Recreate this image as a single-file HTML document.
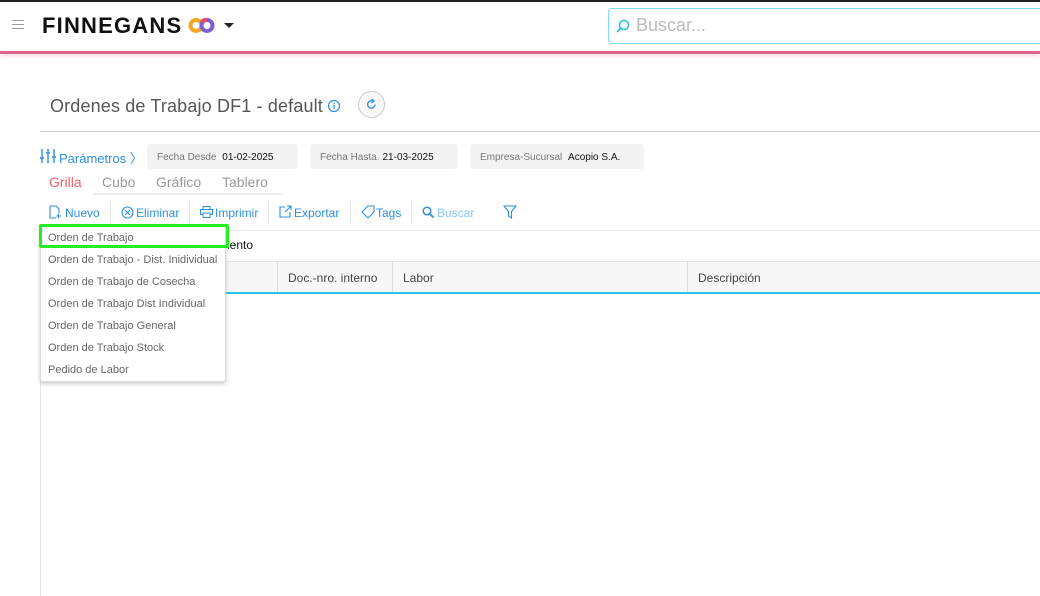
<!DOCTYPE html>
<html><head><meta charset="utf-8"><style>
*{margin:0;padding:0;box-sizing:border-box}
body{width:1040px;height:596px;background:#fff;font-family:"Liberation Sans",sans-serif;position:relative;overflow:hidden}
.a{position:absolute}
.blue{color:#2d8fe0}
</style></head><body>
<div class="a" style="left:0;top:0;width:1040px;height:2px;background:#222"></div>
<div class="a" style="left:0;top:51px;width:1040px;height:3px;background:#e0648a;box-shadow:0 2px 4px rgba(224,100,138,.3)"></div>
<div class="a" style="left:12px;top:20px;width:12px;height:1px;background:#999;box-shadow:0 4px 0 #999,0 8px 0 #999"></div>
<div class="a" style="left:42px;top:13px;font-size:22px;font-weight:bold;letter-spacing:1.2px;color:#111">FINNEGANS</div>
<svg class="a" style="left:188px;top:17px" width="28" height="17" viewBox="0 0 28 17"><circle cx="8" cy="8.5" r="5.5" fill="none" stroke="#f5a623" stroke-width="4"/><circle cx="19" cy="8.5" r="5.5" fill="none" stroke="#7b5fd6" stroke-width="4"/><path d="M13.5 5 A5.5 5.5 0 0 1 19 3" stroke="#e94f6a" stroke-width="4" fill="none"/></svg>
<div class="a" style="left:224px;top:23px;border-left:5px solid transparent;border-right:5px solid transparent;border-top:5px solid #222"></div>
<div class="a" style="left:608px;top:8px;width:440px;height:36px;border:1px solid #7bdcf5;border-radius:4px"></div>
<svg class="a" style="left:615px;top:18px" width="16" height="16" viewBox="0 0 16 16"><circle cx="9" cy="7" r="4.5" fill="none" stroke="#2bbde8" stroke-width="1.6"/><path d="M6 10 L2 14" stroke="#2bbde8" stroke-width="1.8"/></svg>
<div class="a" style="left:636px;top:15px;font-size:18px;color:#bbb">Buscar...</div>

<div class="a" style="left:50px;top:96px;font-size:18px;color:#555;letter-spacing:0.15px">Ordenes de Trabajo DF1 - default</div>
<svg class="a" style="left:327px;top:99px" width="14" height="14"><circle cx="7" cy="7" r="5.5" fill="none" stroke="#2d8fe0" stroke-width="1.2"/><rect x="6.4" y="6" width="1.3" height="4" fill="#2d8fe0"/><rect x="6.4" y="3.8" width="1.3" height="1.3" fill="#2d8fe0"/></svg>
<div class="a" style="left:358px;top:91px;width:27px;height:27px;border:1px solid #ccc;border-radius:50%;background:#f7f7f7"></div>
<svg class="a" style="left:365px;top:98px" width="13" height="13" viewBox="0 0 13 13"><path d="M10 6.5 A3.7 3.7 0 1 1 7.5 3" fill="none" stroke="#2d8fe0" stroke-width="1.3"/><path d="M6.5 1 L9 3 L6.5 5" fill="none" stroke="#2d8fe0" stroke-width="1.2"/></svg>
<div class="a" style="left:40px;top:131px;width:1000px;height:1px;background:#ccc"></div>

<svg class="a" style="left:40px;top:149px" width="16" height="14" viewBox="0 0 16 14"><g stroke="#2d8fe0" stroke-width="1.4"><path d="M2 0v14M8 0v14M14 0v14"/><path d="M0 9h4M6 4h4M12 8h4"/></g></svg>
<div class="a blue" style="left:59px;top:148px;font-size:13px">Parámetros 〉</div>
<div class="a" style="left:147px;top:144px;width:151px;height:25px;background:#f3f3f3;border-radius:3px;font-size:10px;color:#777;padding:8px 10px;white-space:nowrap">Fecha Desde <span style="color:#111;margin-left:3px">01-02-2025</span></div>
<div class="a" style="left:310px;top:144px;width:148px;height:25px;background:#f3f3f3;border-radius:3px;font-size:10px;color:#777;padding:8px 10px;white-space:nowrap">Fecha Hasta <span style="color:#111;margin-left:3px">21-03-2025</span></div>
<div class="a" style="left:470px;top:144px;width:174px;height:25px;background:#f3f3f3;border-radius:3px;font-size:10px;color:#777;padding:8px 10px;white-space:nowrap">Empresa-Sucursal <span style="color:#111;margin-left:3px">Acopio S.A.</span></div>

<div class="a" style="left:49px;top:174px;font-size:14px;color:#f0606a">Grilla</div>
<div class="a" style="left:102px;top:174px;font-size:14px;color:#999">Cubo</div>
<div class="a" style="left:156px;top:174px;font-size:14px;color:#999">Gráfico</div>
<div class="a" style="left:222px;top:174px;font-size:14px;color:#999">Tablero</div>
<div class="a" style="left:93px;top:193px;width:189px;height:2px;background:#eee"></div>

<svg class="a" style="left:49px;top:205px" width="13" height="14"><path d="M1 1h6l3 3v4M1 1v12h6" fill="none" stroke="#2d8fe0" stroke-width="1.1"/><path d="M7 11h5M9.5 8.5v5" stroke="#2d8fe0" stroke-width="1.1"/></svg>
<div class="a blue" style="left:65px;top:206px;font-size:12px">Nuevo</div>
<div class="a" style="left:110px;top:201px;width:1px;height:22px;background:#e5e5e5"></div>
<svg class="a" style="left:121px;top:206px" width="13" height="13"><circle cx="6.5" cy="6.5" r="5.5" fill="none" stroke="#2d8fe0" stroke-width="1.1"/><path d="M4 4l5 5M9 4l-5 5" stroke="#2d8fe0" stroke-width="1.1"/></svg>
<div class="a blue" style="left:136px;top:206px;font-size:12px">Eliminar</div>
<div class="a" style="left:189px;top:201px;width:1px;height:22px;background:#e5e5e5"></div>
<svg class="a" style="left:200px;top:206px" width="13" height="12"><rect x="3" y="0.5" width="7" height="3" fill="none" stroke="#2d8fe0"/><rect x="0.5" y="3.5" width="12" height="5" fill="none" stroke="#2d8fe0"/><rect x="3" y="7" width="7" height="4.5" fill="#fff" stroke="#2d8fe0"/></svg>
<div class="a blue" style="left:215px;top:206px;font-size:12px">Imprimir</div>
<div class="a" style="left:268px;top:201px;width:1px;height:22px;background:#e5e5e5"></div>
<svg class="a" style="left:279px;top:205px" width="13" height="13"><path d="M6 2H1v10h10V7" fill="none" stroke="#2d8fe0" stroke-width="1.1"/><path d="M6 7L12 1M8 1h4v4" fill="none" stroke="#2d8fe0" stroke-width="1.1"/></svg>
<div class="a blue" style="left:294px;top:206px;font-size:12px">Exportar</div>
<div class="a" style="left:350px;top:201px;width:1px;height:22px;background:#e5e5e5"></div>
<svg class="a" style="left:361px;top:205px" width="14" height="13"><path d="M1 7L7 1h6v6l-6 6z" fill="none" stroke="#2d8fe0" stroke-width="1.1"/></svg>
<div class="a blue" style="left:376px;top:206px;font-size:12px">Tags</div>
<div class="a" style="left:411px;top:201px;width:1px;height:22px;background:#e5e5e5"></div>
<svg class="a" style="left:422px;top:206px" width="12" height="12"><circle cx="5" cy="5" r="3.8" fill="none" stroke="#2d8fe0" stroke-width="1.5"/><path d="M8 8l3.5 3.5" stroke="#2d8fe0" stroke-width="1.8"/></svg>
<div class="a" style="left:437px;top:206px;font-size:12px;color:#8cc3ef">Buscar</div>
<svg class="a" style="left:503px;top:205px" width="14" height="14"><path d="M1 1h12L8.5 6.5V13L5.5 11V6.5z" fill="none" stroke="#2d8fe0" stroke-width="1.1"/></svg>

<div class="a" style="left:40px;top:230px;width:1000px;height:1px;background:#e5e5e5"></div>
<div class="a" style="left:40px;top:230px;width:1px;height:366px;background:#e5e5e5"></div>
<div class="a" style="left:227px;top:238px;font-size:12px;color:#111">iento</div>
<div class="a" style="left:40px;top:261px;width:1000px;height:31px;background:#f7f7f7;border-top:1px solid #e5e5e5"></div>
<div class="a" style="left:40px;top:292px;width:1000px;height:2px;background:#27c6ef"></div>
<div class="a" style="left:277px;top:262px;width:1px;height:30px;background:#ddd"></div>
<div class="a" style="left:392px;top:262px;width:1px;height:30px;background:#ddd"></div>
<div class="a" style="left:687px;top:262px;width:1px;height:30px;background:#ddd"></div>
<div class="a" style="left:288px;top:271px;font-size:12px;color:#444">Doc.-nro. interno</div>
<div class="a" style="left:403px;top:271px;font-size:12px;color:#444">Labor</div>
<div class="a" style="left:698px;top:271px;font-size:12px;color:#444">Descripción</div>

<div class="a" style="left:40px;top:225px;width:186px;height:157px;background:#fff;border:1px solid #ddd;border-radius:3px;box-shadow:0 2px 4px rgba(0,0,0,.2);font-size:11px;color:#666">
<div style="position:absolute;left:7px;top:6px">Orden de Trabajo</div>
<div style="position:absolute;left:7px;top:28px">Orden de Trabajo - Dist. Inidividual</div>
<div style="position:absolute;left:7px;top:50px">Orden de Trabajo de Cosecha</div>
<div style="position:absolute;left:7px;top:72px">Orden de Trabajo Dist Individual</div>
<div style="position:absolute;left:7px;top:94px">Orden de Trabajo General</div>
<div style="position:absolute;left:7px;top:116px">Orden de Trabajo Stock</div>
<div style="position:absolute;left:7px;top:138px">Pedido de Labor</div>
</div>
<div class="a" style="left:39px;top:224px;width:190px;height:24px;border:3px solid #22ee22;border-radius:2px"></div>
</body></html>
